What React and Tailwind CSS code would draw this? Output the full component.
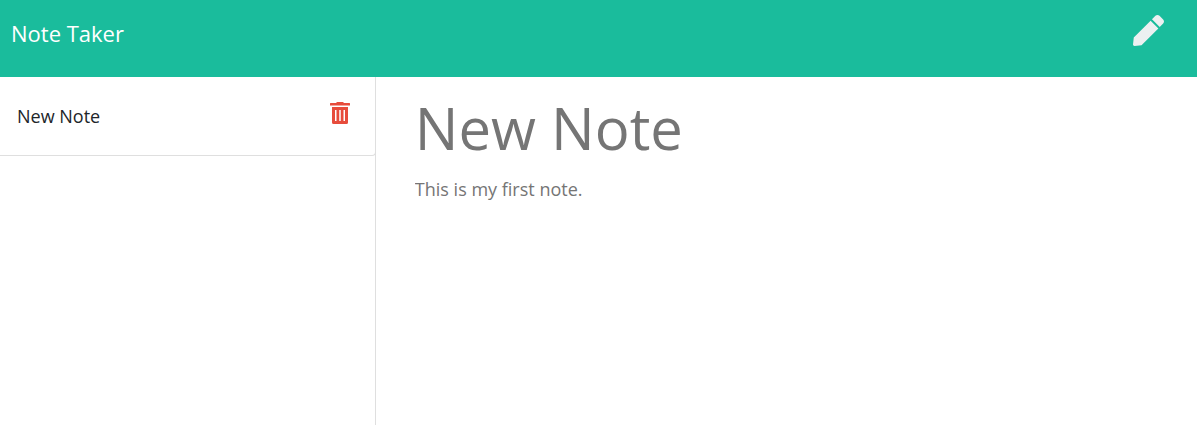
import { useState } from "react";
import { FaPen } from "react-icons/fa";

const initialNotes = [
  { id: 1, title: "New Note", text: "This is my first note." },
];

function TrashIcon() {
  return (
    <svg
      viewBox="0 0 20 22"
      fill="currentColor"
      aria-hidden="true"
      className="h-[22px] w-[20px]"
    >
      <path d="M7 0h6l1 1h5.500a.5.5 0 0 1 .5.500V3.500H0V1.500a.5.5 0 0 1 .5-.500H6z" />
      <path
        fillRule="evenodd"
        d="M2 5h16v15.500a1.500 1.500 0 0 1-1.500 1.500h-13A1.500 1.500 0 0 1 2 20.500zM5 8v11h1.500V8zM9.250 8v11h1.500V8zM13.500 8v11h1.500V8z"
      />
    </svg>
  );
}

function Header({ onNew }) {
  return (
    <header className="flex h-[77px] shrink-0 items-start justify-between bg-[#1abc9c] pr-[33px] pl-[11px]">
      <a href="#notes" className="pt-[17px] text-[22px] leading-8 text-white">
        Note Taker
      </a>
      <button
        type="button"
        aria-label="Write a new note"
        onClick={onNew}
        className="mt-[15px] text-[31px] text-[#ecf0f1]"
      >
        <FaPen />
      </button>
    </header>
  );
}

function NoteItem({ note, onSelect, onDelete }) {
  return (
    <li className="flex h-[79px] items-start justify-between rounded-br-[4px] border-r border-b border-[#dfdfdf] pr-[25px] pl-[17px]">
      <button
        type="button"
        onClick={() => onSelect(note.id)}
        className="pt-[25px] text-[18px] leading-7 text-[#212529]"
      >
        {note.title}
      </button>
      <button
        type="button"
        aria-label={`Delete ${note.title}`}
        onClick={() => onDelete(note.id)}
        className="pt-[25px] text-[#e74c3c]"
      >
        <TrashIcon />
      </button>
    </li>
  );
}

export default function App() {
  const [notes, setNotes] = useState(initialNotes);
  const [activeId, setActiveId] = useState(1);
  const active = notes.find((note) => note.id === activeId);

  return (
    <div className="flex min-h-screen flex-col bg-white font-['Open_Sans',sans-serif]">
      <Header onNew={() => setActiveId(null)} />
      <div className="flex grow">
        <aside className="w-[31.4%] shrink-0 border-r border-[#dfdfdf]">
          <ul className="-mr-px">
            {notes.map((note) => (
              <NoteItem
                key={note.id}
                note={note}
                onSelect={setActiveId}
                onDelete={(id) => setNotes(notes.filter((n) => n.id !== id))}
              />
            ))}
          </ul>
        </aside>
        <main className="flex min-w-0 grow flex-col pt-[15px] pr-6 pl-[39px]">
          <input
            key={`title-${activeId}`}
            type="text"
            aria-label="Note title"
            defaultValue={active ? active.title : ""}
            readOnly={Boolean(active)}
            className="h-[72px] w-full text-[58px] leading-[72px] text-[#757575] outline-none"
          />
          <textarea
            key={`text-${activeId}`}
            aria-label="Note text"
            defaultValue={active ? active.text : ""}
            readOnly={Boolean(active)}
            className="mt-[11px] w-full grow resize-none text-[18px] leading-7 text-[#757575] outline-none"
          />
        </main>
      </div>
    </div>
  );
}
